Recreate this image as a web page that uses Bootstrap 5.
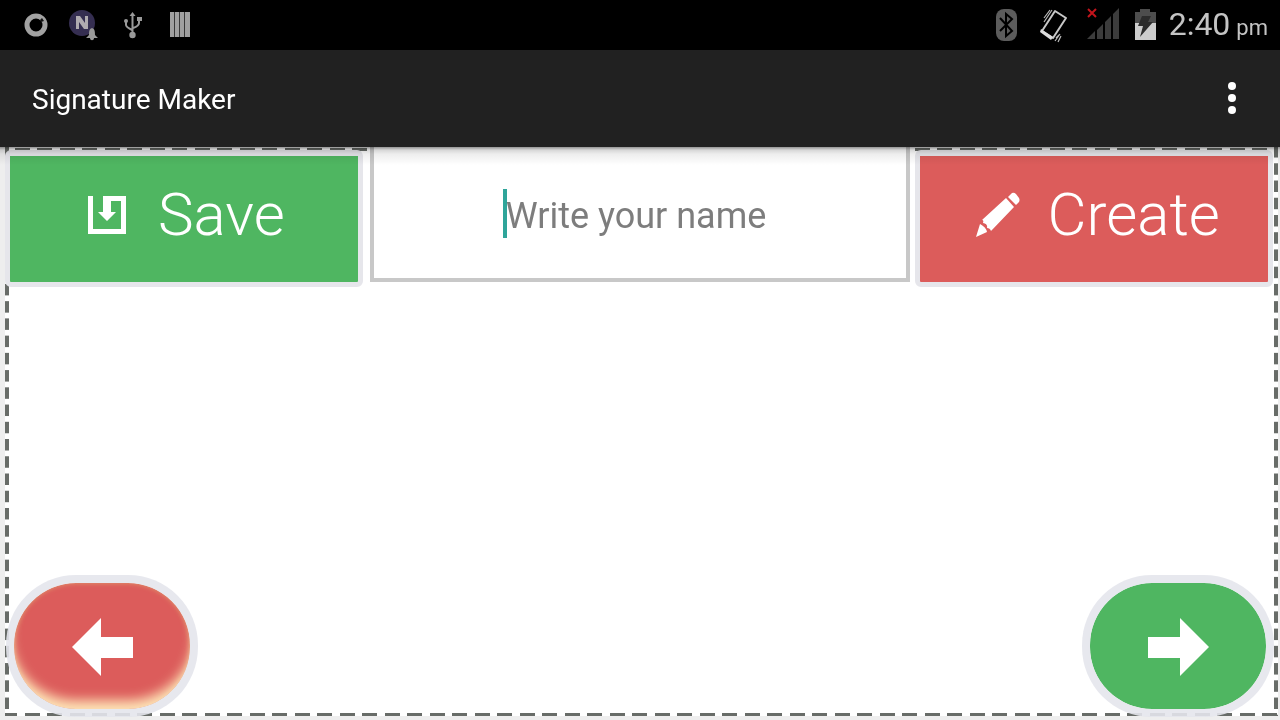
<!DOCTYPE html>
<html lang="en">
<head>
<meta charset="utf-8">
<meta name="viewport" content="width=device-width, initial-scale=1">
<title>Signature Maker</title>
<link href="https://cdn.jsdelivr.net/npm/bootstrap@5.3.0/dist/css/bootstrap.min.css" rel="stylesheet">
<style>
body { font-family: Roboto, "Noto Sans", sans-serif; background: #eee; }
.status-bar { background: #000; height: 50px; color: #c4c4c4; padding: 0 12px; }
.status-bar svg { display: block; }
.clock { font-size: 32px; line-height: 48px; padding: 2px 0 0 3px; }
.clock small { font-size: 22px; margin-left: 6px; }
.app-bar { background: #212121; height: 97px; padding: 0 24px 0 32px; }
.app-bar h1 { font-size: 28px; line-height: 36px; padding-top: 2px; color: #fff; }
.menu-btn { width: 48px; height: 64px; }
.stage { padding: 0 6px 3px 6px; }
/* light shadow that the app bar casts */
.stage::after { content: ""; position: absolute; inset: 0 0 auto 0; height: 18px; pointer-events: none;
  background: linear-gradient(rgba(0,0,0,.42), rgba(0,0,0,.16) 3px, rgba(0,0,0,.07) 7px, transparent); }
/* dashed paper edge */
.paper { position: absolute; inset: 0 2px 4px 5px;
  --v: linear-gradient(#686c68 11px, transparent 11px 16px, #686c68 16px);
  --h: linear-gradient(90deg, #686c68 15px, transparent 15px 22px, #686c68 22px 37px, transparent 37px);
  background: var(--v) 0 0 / 4px 17px repeat-y, var(--v) 100% 0 / 4px 17px repeat-y,
    var(--h) 10px 1px / 45px 3px repeat-x, var(--h) 20px 100% / 45px 3px repeat-x, #fff;
  background-repeat: no-repeat round, no-repeat round, repeat no-repeat, repeat no-repeat, no-repeat; }
.toolbar { margin: 0 1px 0 -1px; }
.tool-btn { width: 28vw; height: 137px; margin-top: 3px; border: 5px solid #e6e6eb; border-top-width: 6px;
  border-radius: 6px; color: #fff; font-size: 60px; font-weight: 300; line-height: 70px; padding: 0 0 8px 76px; gap: 28px; }
.tool-btn.red { padding-left: 56px; }
.tool-btn svg { width: 44px; height: 48px; flex: none; }
.green { background: #4fb661; }
.red { background: #dc5c5b; }
.name-box { margin: 0 5px 0 7px; height: 135px; }
.name-box input { border: 4px solid #c8c8c8; border-top: 0; background: #fff; font-size: 36px; text-align: center; color: #333;
  padding: 6px 8px 0 0; outline: 0; }
.name-box input::placeholder { color: #7d7d7d; opacity: 1; }
.cursor { position: absolute; left: calc(50% - 137px); top: 42px; width: 4px; height: 49px; background: #2fa59a; mix-blend-mode: multiply; }
.pill { width: 192px; height: 142px; border: 8px solid rgba(228,229,236,.9); border-radius: 70px; background-clip: padding-box; padding: 2px 0 0 2px; }
.pill.green { padding-left: 0; }
.pill.red { box-shadow: inset 0 -13px 12px -4px #fde0b4, inset 0 0 5px #e0a070; }
</style>
</head>
<body class="d-flex flex-column min-vh-100">
<header>
  <div class="status-bar d-flex align-items-center justify-content-between ps-0">
    <div class="d-flex ms-2 ps-1">
      <svg width="48" height="50" viewBox="12 0 48 50" aria-hidden="true">
        <circle cx="36" cy="25" r="9" fill="none" stroke="#a2a2a2" stroke-width="5"/>
        <path d="M40 20l2-2 2 3-3 1z" fill="#111"/>
      </svg>
      <svg width="48" height="50" viewBox="60 0 48 50" aria-hidden="true">
        <circle cx="82" cy="23" r="13" fill="#352e51"/>
        <path d="M76 29V16h4l5 7v-7h3v13h-4l-5-7v7z" fill="#b0abb0"/>
        <path d="M92 28c-3 1-3 4-3 7l-3 3h4c0 3 4 3 4 0h4l-3-3c0-3 0-6-3-7z" fill="#999"/>
      </svg>
      <svg width="48" height="50" viewBox="108 0 48 50" aria-hidden="true">
        <g fill="none" stroke="#9a9a9a" stroke-width="2"><path d="M132.500 15v20M126 22v3q0 2 6 5M139 20v3q0 3-6 5"/></g>
        <g fill="#9a9a9a"><path d="M129.500 16l3-4 3 4z"/><circle cx="126" cy="21" r="2"/><path d="M137 17h5v4h-5z"/><circle cx="132.500" cy="35" r="3.200"/></g>
      </svg>
      <svg width="48" height="50" viewBox="156 0 48 50" aria-hidden="true">
        <path d="M170 12h4v25h-4zM175 12h4v25h-4zM180 12h4v25h-4zM185 12h5v25h-5z" fill="#a0a0a0"/><path d="M170 12h20v25h-20z" fill="#a0a0a0" opacity=".35"/>
      </svg>
    </div>
    <div class="d-flex align-items-center">
      <svg width="48" height="50" viewBox="984 0 48 50" aria-hidden="true">
        <rect x="998" y="9" width="21" height="32" rx="8" fill="#5c5c5c"/>
        <path d="M1002 18l12 13-6 5V14l6 5-12 12" fill="none" stroke="#000" stroke-width="2"/>
      </svg>
      <svg width="48" height="50" viewBox="1032 0 48 50" aria-hidden="true">
        <path d="M1057 11l11 7-13 20-11-7z" fill="none" stroke="#c8c8c8" stroke-width="2" stroke-linejoin="round"/>
        <path d="M1043 29l12 8-2 3-11-8z" fill="#ddd"/>
        <path d="M1046 18l6-8M1046 22l8-12M1049 14l3-4M1057 41l5-7M1060 42l3-6M1058 38l3-3" stroke="#bbb" stroke-width="1.200"/>
      </svg>
      <svg width="48" height="50" viewBox="1080 0 48 50" aria-hidden="true">
        <path d="M1089 39l8-8v8zM1099 30l6-6v15h-6zM1107 22l6-6v23h-6zM1115 14l6-6v31h-6z" fill="#3c3c3c"/>
        <path d="M1090 9l8 8M1098 9l-8 8" stroke="#c3141c" stroke-width="2"/>
      </svg>
      <svg width="40" height="50" viewBox="1128 0 40 50" aria-hidden="true">
        <path d="M1137 12h5V9h10v3h6v11h-21z" fill="#4d4d4d"/><path d="M1137 23h21v17h-21z" fill="#ccc"/>
        <path d="M1144 16h9l-3 6h5l-13 15 3-11h-5z" fill="#2c2c2c"/>
      </svg>
      <span class="clock">2:40<small>pm</small></span>
    </div>
  </div>
  <div class="app-bar d-flex align-items-center justify-content-between">
    <h1 class="m-0 fw-normal">Signature Maker</h1>
    <button class="menu-btn btn p-0 border-0" type="button" aria-label="More options">
      <svg width="48" height="64" viewBox="0 0 48 64" fill="#fff"><circle cx="24" cy="19" r="4"/><circle cx="24" cy="31" r="4"/><circle cx="24" cy="43" r="4"/></svg>
    </button>
  </div>
</header>
<main class="stage position-relative flex-grow-1 d-flex flex-column">
  <div class="paper"></div>
  <div class="toolbar d-flex align-items-start position-relative">
    <button class="tool-btn green d-flex align-items-center" type="button">
      <svg viewBox="0 0 44 48"><path d="M2 5h5v33h28V10H25v11h5l-9 9-9-9h5V5h23v38H2z" fill="#fff"/></svg>
      <span>Save</span>
    </button>
    <div class="name-box flex-grow-1 position-relative">
      <input class="w-100 h-100 d-block" type="text" placeholder="Write your name" aria-label="Write your name">
      <span class="cursor"></span>
    </div>
    <button class="tool-btn red d-flex align-items-center" type="button">
      <svg viewBox="976 190 44 48">
        <path d="M1012 192q2-1 4 1l3 4q1 2 0 4l-3 3-8-8zM1006 197l8 9-23 24q-1-3-4-3 1-4-4-5 1-3-1-3zM980 223q6 3 7 8l-11 5z" fill="#fff"/>
      </svg>
      <span>Create</span>
    </button>
  </div>
  <div class="d-flex justify-content-between position-relative mt-auto">
    <button class="pill red" type="button" aria-label="Previous">
      <svg width="64" height="60" viewBox="0 0 64 60"><path d="M1 30L30 1v19h32v21H30v18z" fill="#fff"/></svg>
    </button>
    <button class="pill green" type="button" aria-label="Next">
      <svg width="64" height="60" viewBox="0 0 64 60"><path d="M63 30L34 1v19H2v21h32v18z" fill="#fff"/></svg>
    </button>
  </div>
</main>
<script src="https://cdn.jsdelivr.net/npm/bootstrap@5.3.0/dist/js/bootstrap.bundle.min.js"></script>
</body>
</html>
